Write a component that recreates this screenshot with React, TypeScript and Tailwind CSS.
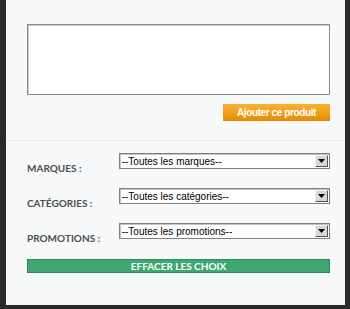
import React from "react";

function Select({ text }: { text: string }) {
  return (
    <div className="flex h-[16px] w-[212px] border border-[#7f7f7f] bg-white shadow-[inset_1px_1px_0_#c4c4c4] p-px">
      <div className="flex-1 pl-[1px] text-[10px] leading-[13px] text-black [font-family:'Liberation_Sans',Arial,sans-serif]">
        {text}
      </div>
      <div className="flex h-[12px] w-[13px] items-center justify-center border border-t-[#f4f4f4] border-l-[#f4f4f4] border-r-[#555] border-b-[#555] bg-[#d8d8d4]">
        <svg width="7" height="4" viewBox="0 0 7 4">
          <polygon points="0,0 7,0 3.5,4" fill="#000" />
        </svg>
      </div>
    </div>
  );
}

function Row({ label, text }: { label: string; text: string }) {
  return (
    <div className="flex h-[16px] items-start">
      <div className="h-[16px] w-[92px] pt-[10px] text-[10px] leading-[10px] font-bold text-[#4f4f4f] [font-family:Lato,'Liberation_Sans',sans-serif]">
        {label}
      </div>
      <Select text={text} />
    </div>
  );
}

export default function App() {
  return (
    <div className="relative h-[309px] w-[350px] overflow-hidden bg-[#2a2a2a]">
      <div className="ml-[6px] h-[305px] w-[339px] bg-[#f6f8f9]">
        <div className="flex flex-col items-start pl-[21px] pr-[15px] pt-[24px] pb-[19px]">
          <div className="h-[71px] w-[303px] border border-[#8a8a8a] bg-white shadow-[inset_1px_1px_0_#c8c8c8]" />
          <div className="mt-[9px] flex h-[17px] w-[107px] items-center justify-center self-end bg-gradient-to-b from-[#fbb030] to-[#e48c00] text-[10px] font-bold tracking-[-0.4px] text-white [font-family:'Liberation_Sans',Arial,sans-serif]">
            Ajouter ce produit
          </div>
        </div>
        <div className="border-t border-[#e6e9eb]" />
        <div className="flex flex-col gap-[19px] pl-[21px] pr-[15px] pt-[12px]">
          <Row label="MARQUES :" text="--Toutes les marques--" />
          <Row label="CATÉGORIES :" text="--Toutes les catégories--" />
          <Row label="PROMOTIONS :" text="--Toutes les promotions--" />
        </div>
        <div className="ml-[21px] mt-[20px] flex h-[14px] w-[303px] items-center justify-center border border-[#2c8a5a] bg-[#3fa872] text-[10px] font-bold text-white [font-family:Lato,'Liberation_Sans',sans-serif]">
          EFFACER LES CHOIX
        </div>
      </div>
    </div>
  );
}
